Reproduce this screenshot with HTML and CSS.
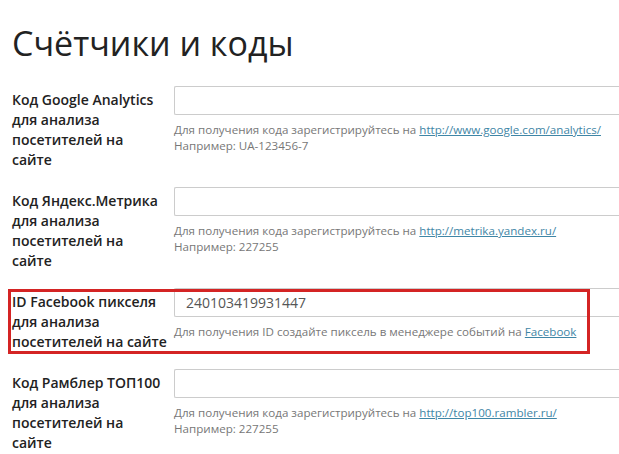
FILE: index.html
```html
<!DOCTYPE html>
<html lang="ru">

<head>
    <meta charset="UTF-8">
    <meta name="viewport" content="width=device-width, initial-scale=1.0">
    <title>Счётчики и коды</title>
    <link rel="stylesheet" href="styles.css">
</head>

<body>
    <div class="page">
        <h1>Счётчики и коды</h1>

        <div class="field-row">
            <label class="field-label" for="ga">Код Google Analytics<br>для анализа<br>посетителей на<br>сайте</label>
            <div class="field-body">
                <input type="text" id="ga" class="field-input">
                <div class="field-hint">
                    Для получения кода зарегистрируйтесь на <a href="#">http://www.google.com/analytics/</a><br>
                    Например: UA-123456-7
                </div>
            </div>
        </div>

        <div class="field-row">
            <label class="field-label" for="ym">Код Яндекс.Метрика<br>для анализа<br>посетителей на<br>сайте</label>
            <div class="field-body">
                <input type="text" id="ym" class="field-input">
                <div class="field-hint">
                    Для получения кода зарегистрируйтесь на <a href="#">http://metrika.yandex.ru/</a><br>
                    Например: 227255
                </div>
            </div>
        </div>

        <div class="field-row highlighted">
            <label class="field-label" for="fb">ID Facebook пикселя<br>для анализа<br>посетителей на сайте</label>
            <div class="field-body">
                <input type="text" id="fb" class="field-input" value="240103419931447">
                <div class="field-hint">
                    Для получения ID создайте пиксель в менеджере событий на <a href="#">Facebook</a>
                </div>
            </div>
        </div>

        <div class="field-row">
            <label class="field-label" for="rambler">Код Рамблер ТОП100<br>для анализа<br>посетителей на<br>сайте</label>
            <div class="field-body">
                <input type="text" id="rambler" class="field-input">
                <div class="field-hint">
                    Для получения кода зарегистрируйтесь на <a href="#">http://top100.rambler.ru/</a><br>
                    Например: 227255
                </div>
            </div>
        </div>
    </div>
</body>

</html>
```

FILE: styles.css
```css
body {
    font-family: "Open Sans", "Noto Sans", sans-serif;
    background-color: #fff;
    color: #222;
    margin: 0;
    padding: 0;
}

.page {
    padding: 23px 0 0 12px;
    height: 454px;
    box-sizing: border-box;
    overflow: hidden;
}

h1 {
    margin: 0 0 23px;
    font-size: 34px;
    font-weight: 400;
    line-height: 40px;
    color: #222;
}

.field-row {
    position: relative;
    display: flex;
    margin-bottom: 17px;
}

.field-label {
    flex: 0 0 162px;
    padding-top: 4px;
    font-size: 14px;
    font-weight: 600;
    line-height: 20px;
    color: #222;
}

.field-body {
    flex: 1 1 auto;
    margin-right: -4px;
}

.field-input {
    display: block;
    box-sizing: border-box;
    width: 100%;
    height: 29px;
    padding: 0 11px;
    border: 1px solid #ccc;
    border-right: none;
    border-radius: 2px 0 0 2px;
    font-family: inherit;
    font-size: 14px;
    color: #555;
}

.field-hint {
    margin-top: 7px;
    font-size: 11.6px;
    line-height: 16px;
    color: #777;
}

.field-hint a {
    color: #3f86a6;
}

.highlighted::after {
    content: "";
    position: absolute;
    left: -4px;
    top: 1px;
    width: 582px;
    height: 65px;
    box-sizing: border-box;
    border: 3px solid #d42424;
    pointer-events: none;
}
```
